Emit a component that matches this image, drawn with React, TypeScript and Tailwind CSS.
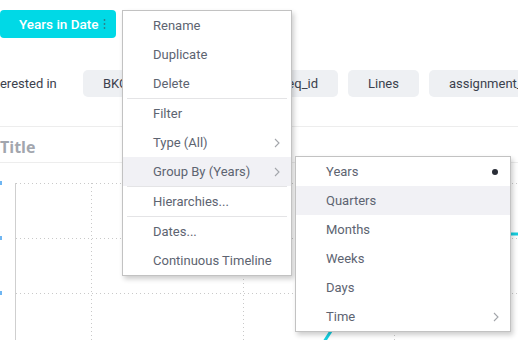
import React from "react";

const Chevron = () => (
  <svg width="6" height="10" viewBox="0 0 6 10" className="shrink-0">
    <path d="M1 1 L5 5 L1 9" fill="none" stroke="#a3a6ab" strokeWidth="1.1" />
  </svg>
);

type Item = { label?: string; sep?: boolean; hl?: boolean; chev?: boolean; dot?: boolean };

const Menu = ({ items, className }: { items: Item[]; className: string }) => (
  <div className={"absolute bg-white border border-[#c2c2c2] shadow-[2px_3px_5px_rgba(0,0,0,0.2)] " + className}>
    {items.map((it, i) =>
      it.sep ? (
        <div key={i} className="h-px bg-[#e4e4e6] mx-[4px]" />
      ) : (
        <div
          key={i}
          className={
            "h-[29px] flex items-center justify-between pl-[30px] pr-[11px] text-[13px] text-[#5d6471] " +
            (it.hl ? "bg-[#f1f1f5]" : "")
          }
        >
          <span>{it.label}</span>
          {it.chev && <Chevron />}
          {it.dot && <span className="w-[6px] h-[6px] rounded-full bg-[#2a2e37] mr-[1px]" />}
        </div>
      )
    )}
  </div>
);

const chipCls =
  "h-[27px] rounded-[5px] bg-[#eef0f3] px-5 flex items-center text-[13px] text-[#3b414d] whitespace-nowrap shrink-0";

export default function App() {
  const main: Item[] = [
    { label: "Rename" },
    { label: "Duplicate" },
    { label: "Delete" },
    { sep: true },
    { label: "Filter" },
    { label: "Type (All)", chev: true },
    { label: "Group By (Years)", chev: true, hl: true },
    { sep: true },
    { label: "Hierarchies..." },
    { sep: true },
    { label: "Dates..." },
    { label: "Continuous Timeline" },
  ];
  const sub: Item[] = [
    { label: "Years", dot: true },
    { label: "Quarters", hl: true },
    { label: "Months" },
    { label: "Weeks" },
    { label: "Days" },
    { label: "Time", chev: true },
  ];
  return (
    <div
      className="relative w-[518px] h-[340px] overflow-hidden bg-white"
      style={{ fontFamily: "Roboto, 'Liberation Sans', sans-serif" }}
    >
      <div className="h-[127px] border-b border-[#ededed]">
        <div className="pt-[10px]">
          <div className="h-[28px] w-[116px] rounded-[4px] bg-[#00d9e6] flex items-center pl-[19px] pr-[10px] justify-between">
            <span className="text-white text-[13.5px] font-medium">Years in Date</span>
            <svg width="3" height="12" viewBox="0 0 3 12">
              <circle cx="1.5" cy="2" r="0.9" fill="#2f7d86" />
              <circle cx="1.5" cy="6" r="0.9" fill="#2f7d86" />
              <circle cx="1.5" cy="10" r="0.9" fill="#2f7d86" />
            </svg>
          </div>
        </div>
        <div className="mt-[32px] flex items-center h-[27px]">
          <div className="w-[83px] shrink-0 overflow-hidden">
            <span className="block -ml-[15px] whitespace-nowrap text-[13px] text-[#3b414d]">Interested in</span>
          </div>
          <div className="flex gap-[10px]">
            <div className={chipCls + " w-[90px]"}>BKG_ID</div>
            <div className={chipCls + " w-[155px] justify-end"}>booking_seq_id</div>
            <div className={chipCls}>Lines</div>
            <div className={chipCls}>assignment_type</div>
          </div>
        </div>
      </div>
      <div className="h-[36px] border-b border-[#ededed] flex items-center pt-[5px]">
        <span
          className="text-[16px] font-bold text-[#a2a6ae]"
          style={{ fontFamily: "'Open Sans', sans-serif" }}
        >
          Title
        </span>
      </div>
      <div className="relative h-[177px]">
        <svg width="518" height="177" className="absolute left-0 top-0">
          <g stroke="#c9c9c9" strokeWidth="1" strokeDasharray="1 3">
            <line x1="16" y1="20.5" x2="518" y2="20.5" />
            <line x1="16" y1="75.5" x2="518" y2="75.5" />
            <line x1="16" y1="130.5" x2="518" y2="130.5" />
            <line x1="91.5" y1="20" x2="91.5" y2="177" />
            <line x1="243.5" y1="20" x2="243.5" y2="177" />
            <line x1="394.5" y1="20" x2="394.5" y2="177" />
          </g>
          <line x1="15.5" y1="20" x2="15.5" y2="177" stroke="#cfcfcf" strokeWidth="1" />
          <rect x="0" y="18" width="2" height="4" fill="#6fb6f2" />
          <rect x="0" y="73" width="2" height="4" fill="#6fb6f2" />
          <rect x="0" y="128" width="2" height="4" fill="#6fb6f2" />
          <polyline
            points="322,182 335,162 505,71 520,71"
            fill="none"
            stroke="#17cfe0"
            strokeWidth="3"
          />
        </svg>
      </div>
      <Menu items={main} className="left-[122px] top-[10px] w-[170px]" />
      <Menu items={sub} className="left-[295px] top-[156px] w-[216px]" />
    </div>
  );
}
